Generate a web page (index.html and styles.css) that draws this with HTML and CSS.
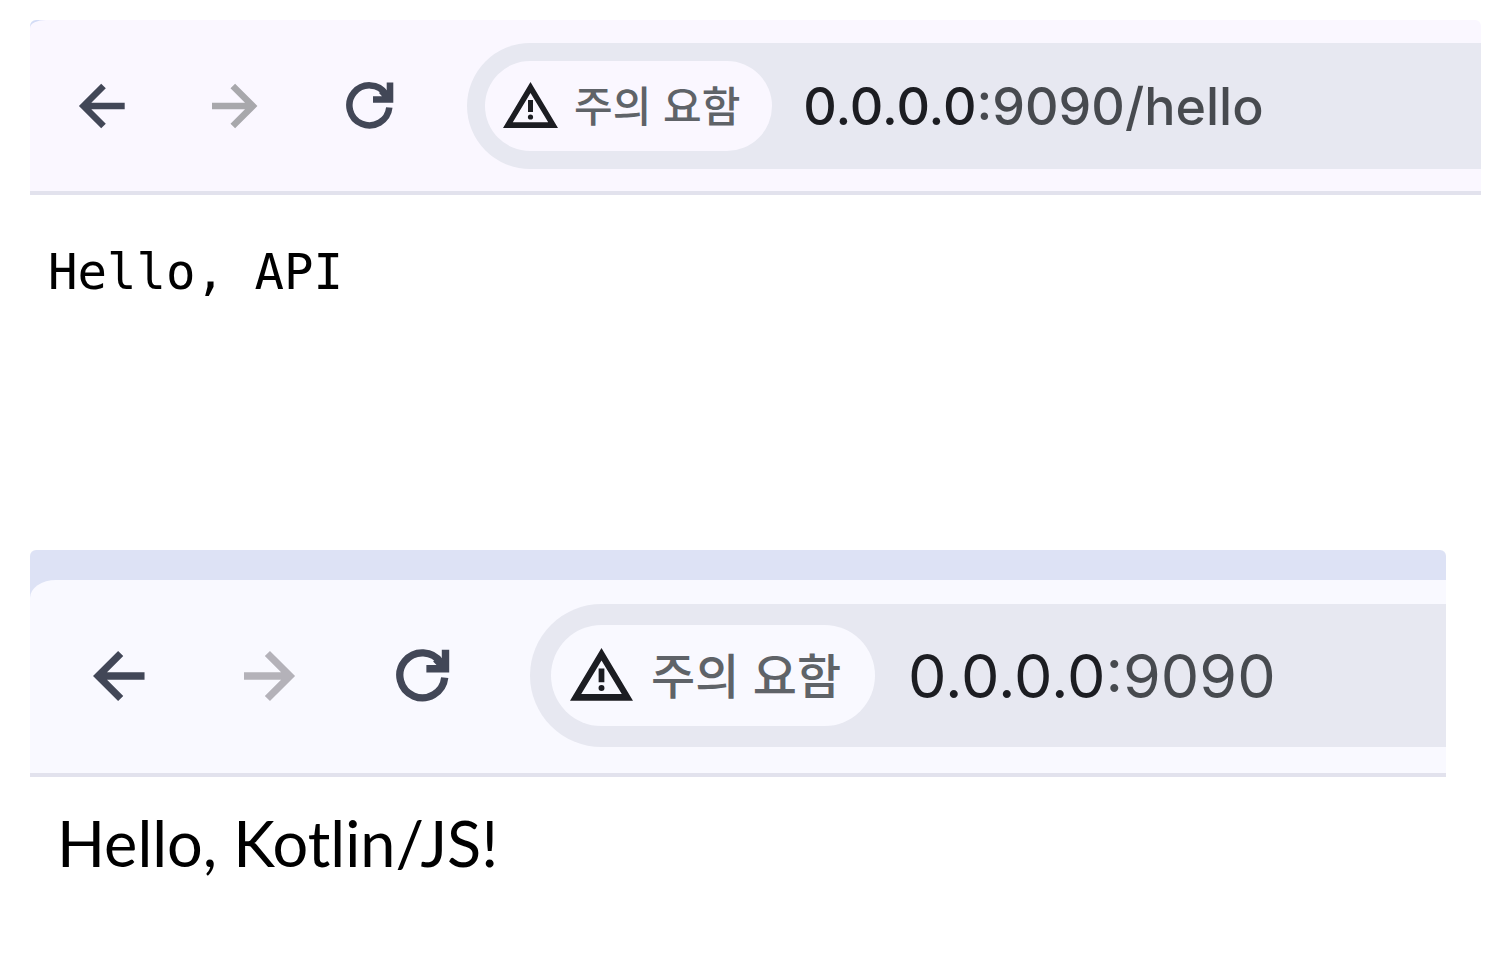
FILE: index.html
```html
<!DOCTYPE html>
<html lang="ko">
<head>
<meta charset="utf-8">
<title>Hello</title>
<link rel="stylesheet" href="styles.css">
</head>
<body>
<main class="page">
  <section class="window window-api">
    <header class="toolbar">
      <nav class="nav">
        <button class="nav-button" type="button" aria-label="뒤로"><svg class="nav-icon" viewBox="0 0 48 48"><path class="line" d="M25.5 4 5.5 24l20 20M5.5 24h41.2"/></svg></button>
        <button class="nav-button" type="button" aria-label="앞으로" disabled><svg class="nav-icon" viewBox="0 0 48 48"><path class="line" d="M20.8 4l20 20-20 20M40.8 24H0"/></svg></button>
        <button class="nav-button" type="button" aria-label="새로고침"><svg class="nav-icon" viewBox="0 0 48 48"><path class="line" d="M43.3 25.5A20 20 0 1 1 40 12.2"/><path d="M40.7.6h6.6v20.2H27v-6.6h9L33 11l5-5 2.7 3z"/></svg></button>
      </nav>
      <form class="address">
        <button class="chip" type="button"><svg class="warning" viewBox="0 0 55 46"><path fill-rule="evenodd" d="M27.5 0 55 46H0ZM27.5 11 9.8 40.2h35.4Z"/><path d="M25 18h5v12h-5z"/><circle cx="27.5" cy="35" r="2.6"/></svg><span class="chip-label">주의 요함</span></button>
        <input class="url" type="text" aria-label="주소" value="0.0.0.0:9090/hello">
      </form>
    </header>
    <pre class="output">Hello, API</pre>
  </section>
  <section class="window window-js">
    <div class="tabstrip"></div>
    <header class="toolbar">
      <nav class="nav">
        <button class="nav-button" type="button" aria-label="뒤로"><svg class="nav-icon" viewBox="0 0 48 48"><path class="line" d="M25.5 4 5.5 24l20 20M5.5 24h41.2"/></svg></button>
        <button class="nav-button" type="button" aria-label="앞으로" disabled><svg class="nav-icon" viewBox="0 0 48 48"><path class="line" d="M20.8 4l20 20-20 20M40.8 24H0"/></svg></button>
        <button class="nav-button" type="button" aria-label="새로고침"><svg class="nav-icon" viewBox="0 0 48 48"><path class="line" d="M43.3 25.5A20 20 0 1 1 40 12.2"/><path d="M40.7.6h6.6v20.2H27v-6.6h9L33 11l5-5 2.7 3z"/></svg></button>
      </nav>
      <form class="address">
        <button class="chip" type="button"><svg class="warning" viewBox="0 0 55 46"><path fill-rule="evenodd" d="M27.5 0 55 46H0ZM27.5 11 9.8 40.2h35.4Z"/><path d="M25 18h5v12h-5z"/><circle cx="27.5" cy="35" r="2.6"/></svg><span class="chip-label">주의 요함</span></button>
        <input class="url" type="text" aria-label="주소" value="0.0.0.0:9090">
      </form>
    </header>
    <p class="output">Hello, Kotlin/JS!</p>
  </section>
</main>
</body>
</html>
```
FILE: styles.css
```css
* {
  box-sizing: border-box;
}

body {
  margin: 0;
  background: #fff;
  font-family: Inter, "Noto Sans CJK KR", sans-serif;
}

.page {
  padding: 20px 27px 0 30px;
}

.window {
  --bar: #faf7ff;
  --icon: 48px;
  overflow: hidden;
  border-radius: 6px;
}

.window-api {
  min-height: 530px;
  background: linear-gradient(#d3dcf6, #d3dcf6) 0 0 / 24px 12px no-repeat;
}

.window-js {
  --bar: #f9f9ff;
  --icon: 54px;
  margin-right: 35px;
  background: linear-gradient(#dde2f5, #dde2f5) 0 0 / 100% 64px no-repeat;
}

.tabstrip {
  height: 30px;
}

.toolbar {
  display: flex;
  align-items: center;
  gap: 73px;
  padding: 23px 0 22px 48px;
  border-bottom: 4px solid #e2e2ed;
  border-radius: 16px 0 0 0 / 8px 0 0 0;
  background: var(--bar);
}

.window-js .toolbar {
  gap: 80px;
  padding: 24px 0 26px 62px;
  border-radius: 26px 0 0 0 / 18px 0 0 0;
}

.nav {
  display: flex;
  gap: 86px;
}

.window-js .nav {
  gap: 98px;
}

.nav-button {
  padding: 0;
  border: 0;
  background: none;
  color: #424757;
}

.nav-button:disabled {
  color: #a8a8ac;
}

.window-js .nav-button:disabled {
  color: #b4b2b9;
}

.nav-icon {
  display: block;
  width: var(--icon);
  height: var(--icon);
  fill: currentColor;
}

.line {
  fill: none;
  stroke: currentColor;
  stroke-width: 6.5;
}

.address {
  display: flex;
  flex: 1;
  align-items: center;
  gap: 31px;
  min-width: 0;
  height: 126px;
  padding-left: 18px;
  border-radius: 63px 0 0 63px;
  background: #e7e8f1;
}

.window-js .address {
  gap: 33px;
  height: 143px;
  padding-left: 21px;
  border-radius: 72px 0 0 72px;
}

.chip {
  display: flex;
  flex: none;
  align-items: center;
  gap: 16px;
  height: 90px;
  padding: 0 32px 2px 18px;
  border: 0;
  border-radius: 45px;
  background: var(--bar);
  color: #5f6368;
  font: 500 42px/60px "Noto Sans CJK KR", sans-serif;
}

.window-js .chip {
  gap: 18px;
  height: 101px;
  padding: 0 34px 2px 19px;
  border-radius: 51px;
  font-size: 48px;
}

.chip-label {
  padding-bottom: 3px;
}

.warning {
  width: 55px;
  fill: #1c1d22;
}

.window-js .warning {
  width: 63px;
}

.url {
  --host: 176px;
  flex: 1;
  min-width: 0;
  padding: 2px 0 0;
  border: 0;
  background: linear-gradient(90deg, #1c1d22 var(--host), #474a4f var(--host));
  background-clip: text;
  color: #474a4f;
  font: 500 52px/72px Inter, sans-serif;
  -webkit-text-fill-color: transparent;
}

.window-js .url {
  --host: 199px;
  padding: 0;
  font-weight: 400;
  font-size: 61px;
}

.output {
  margin: 0;
  color: #000;
}

.window-api .output {
  padding: 49px 18px;
  font: 49px/58px "DejaVu Sans Mono", monospace;
}

.window-js .output {
  padding: 20px 27px;
  font: 63px/92px Lato, sans-serif;
}
```
